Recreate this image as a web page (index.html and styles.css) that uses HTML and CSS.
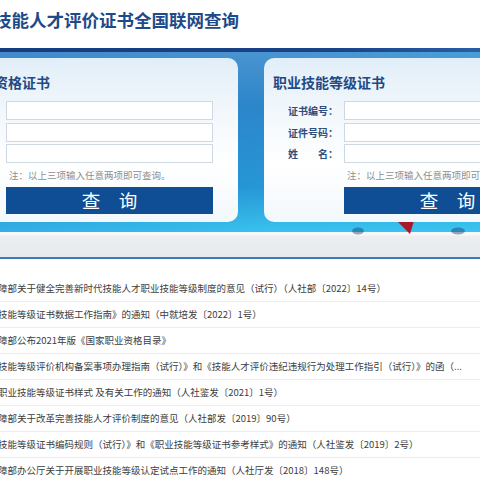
FILE: index.html
```html
<!DOCTYPE html>
<html lang="zh-CN">
<head>
<meta charset="utf-8">
<title>技能人才评价证书全国联网查询</title>
<link rel="stylesheet" href="styles.css">
</head>
<body>
<div class="page">
  <header class="top">
    <h1 class="title">技能人才评价证书全国联网查询</h1>
  </header>
  <div class="navbar"></div>
  <section class="banner">
    <svg class="deco" width="150" height="24" viewBox="0 0 150 24" aria-hidden="true">
      <ellipse cx="8" cy="19" rx="6" ry="3.5" fill="#1b3f73" opacity="0.45"/>
      <path d="M40 2 L66 2 L60 22 Z" fill="#a8192b"/>
      <ellipse cx="108" cy="19" rx="7" ry="3.5" fill="#1b3f73" opacity="0.45"/>
    </svg>
    <div class="card card-left">
      <h2 class="card-title card-title-left">资格证书</h2>
      <div class="form">
        <span class="label"></span><input class="field" type="text">
        <span class="label"></span><input class="field" type="text">
        <span class="label"></span><input class="field" type="text">
        <span class="label"></span><p class="note">注：以上三项输入任意两项即可查询。</p>
        <span class="label"></span><button class="btn" type="button">查　询</button>
      </div>
    </div>
    <div class="card card-right">
      <h2 class="card-title">职业技能等级证书</h2>
      <div class="form">
        <span class="label">证书编号：</span><input class="field" type="text">
        <span class="label">证件号码：</span><input class="field" type="text">
        <span class="label">姓　　名：</span><input class="field" type="text">
        <span class="label"></span><p class="note">注：以上三项输入任意两项即可查询。</p>
        <span class="label"></span><button class="btn" type="button">查　询</button>
      </div>
    </div>
  </section>
  <div class="subbar"></div>
  <ul class="list">
    <li>障部关于健全完善新时代技能人才职业技能等级制度的意见（试行）（人社部〔2022〕14号）</li>
    <li>技能等级证书数据工作指南》的通知（中就培发〔2022〕1号）</li>
    <li>障部公布2021年版《国家职业资格目录》</li>
    <li>技能等级评价机构备案事项办理指南（试行）》和《技能人才评价违纪违规行为处理工作指引（试行）》的函（...</li>
    <li>职业技能等级证书样式 及有关工作的通知（人社鉴发〔2021〕1号）</li>
    <li>障部关于改革完善技能人才评价制度的意见（人社部发〔2019〕90号）</li>
    <li>技能等级证书编码规则（试行）》和《职业技能等级证书参考样式》的通知（人社鉴发〔2019〕2号）</li>
    <li>障部办公厅关于开展职业技能等级认定试点工作的通知（人社厅发〔2018〕148号）</li>
  </ul>
</div>
</body>
</html>
```
FILE: styles.css
```css
html, body {
  margin: 0;
  padding: 0;
  background: #fff;
  overflow: hidden;
}
body {
  font-family: "Noto Sans CJK SC", "Noto Sans", sans-serif;
}
.page {
  margin-left: -74px;
  width: 680px;
}
.top {
  height: 48px;
  background: #fff;
}
.title {
  margin: 0;
  padding: 8px 0 0 68px;
  font-size: 17.5px;
  line-height: 24px;
  font-weight: 700;
  color: #1e4a8a;
  white-space: nowrap;
}
.navbar {
  height: 4px;
  background: linear-gradient(90deg, #153b7b 0%, #1a4388 60%, #2a5ea4 82%, #7eaedb 100%);
}
.banner {
  position: relative;
  display: flex;
  gap: 26px;
  padding: 6px 0 10px;
  background:
    linear-gradient(90deg, rgba(30, 100, 190, 0.25) 0%, rgba(30, 100, 190, 0) 50%, rgba(70, 210, 245, 0.25) 100%),
    linear-gradient(180deg, #4a94d1 0%, #2c86ca 30%, #2697d6 75%, #38c2ee 100%);
}
.deco {
  position: absolute;
  left: 424px;
  top: 160px;
}
.card {
  position: relative;
  z-index: 1;
  width: 312px;
  flex: none;
  box-sizing: border-box;
  border-radius: 10px;
  padding: 15px 25px 8px 0;
  background: linear-gradient(180deg, #e1eef8 0%, #f3f8fc 35%, #ffffff 65%, #f2f8fc 100%);
}
.card-title {
  margin: 0 0 10px;
  padding-left: 9px;
  font-size: 14px;
  line-height: 18px;
  font-weight: 700;
  color: #1f4a85;
  white-space: nowrap;
}
.card-title-left {
  padding-left: 68px;
}
.form {
  display: grid;
  grid-template-columns: 80px 207px;
  row-gap: 2.5px;
  align-items: center;
}
.label {
  padding-left: 24px;
  font-size: 10px;
  line-height: 19px;
  font-weight: 700;
  color: #2d4d7c;
  white-space: nowrap;
}
.field {
  display: block;
  box-sizing: border-box;
  width: 207px;
  height: 19px;
  margin: 0;
  border: 1px solid #cfd9e3;
  background: #fff;
  padding: 0 4px;
  font: inherit;
  outline: none;
}
.note {
  margin: 2.5px 0 0;
  padding-left: 3px;
  font-size: 9.5px;
  line-height: 14px;
  color: #8f8f8f;
  white-space: nowrap;
}
.btn {
  display: block;
  width: 207px;
  height: 27px;
  margin: 2.5px 0 0;
  border: 0;
  padding: 0;
  background: #0f4e94;
  color: #fff;
  font-family: "Noto Sans CJK SC", sans-serif;
  font-size: 18.5px;
  line-height: 27px;
  cursor: pointer;
}
.subbar {
  height: 25px;
  background: linear-gradient(180deg, #f7f8f9 0, #f7f8f9 3px, #eceef1 4px, #e7eaed 100%);
  border-bottom: 2px solid #3b79b9;
}
.list {
  list-style: none;
  margin: 17px 0 0;
  padding: 0 0 0 72px;
}
.list li {
  height: 25px;
  line-height: 25px;
  border-bottom: 1px solid #ececec;
  font-size: 9.5px;
  color: #3d3d3d;
  white-space: nowrap;
}
```
